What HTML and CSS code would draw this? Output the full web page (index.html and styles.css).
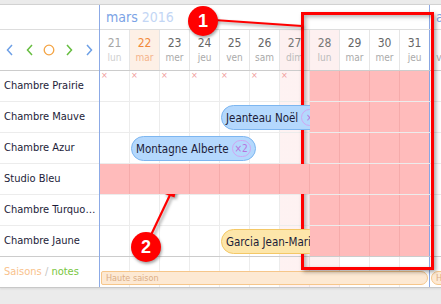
FILE: index.html
```html
<!DOCTYPE html>
<html lang="fr">
<head>
    <meta charset="UTF-8">
    <title>Planning - mars 2016</title>
    <link rel="stylesheet" href="styles.css">
</head>
<body>
    <div class="planner">
        <div class="side">
            <div class="side-head"></div>
            <div class="nav">
                <span class="nav-btn"><svg width="8" height="12" viewBox="0 0 8 12"><path d="M6 1 1.5 6 6 11" fill="none" stroke="#6d9fe6" stroke-width="1.5"/></svg></span>
                <span class="nav-btn"><svg width="8" height="12" viewBox="0 0 8 12"><path d="M6 1 1.5 6 6 11" fill="none" stroke="#66bd3f" stroke-width="1.5"/></svg></span>
                <span class="nav-btn"><svg width="12" height="12" viewBox="0 0 12 12"><circle cx="6" cy="6" r="4.8" fill="none" stroke="#f4a444" stroke-width="1.3"/></svg></span>
                <span class="nav-btn"><svg width="8" height="12" viewBox="0 0 8 12"><path d="M2 1 6.5 6 2 11" fill="none" stroke="#66bd3f" stroke-width="1.5"/></svg></span>
                <span class="nav-btn"><svg width="8" height="12" viewBox="0 0 8 12"><path d="M2 1 6.5 6 2 11" fill="none" stroke="#6d9fe6" stroke-width="1.5"/></svg></span>
            </div>
            <div class="room">Chambre Prairie</div>
            <div class="room">Chambre Mauve</div>
            <div class="room">Chambre Azur</div>
            <div class="room">Studio Bleu</div>
            <div class="room">Chambre Turquoise</div>
            <div class="room last">Chambre Jaune</div>
            <div class="season-label"><span class="saisons">Saisons</span> / <span class="notes">notes</span></div>
        </div>

        <div class="timeline">
            <div class="months">
                <div class="month">mars <span class="year">2016</span></div>
                <div class="month next">avril</div>
            </div>
            <div class="days">
                <div class="day past"><b>21</b><span>lun</span></div>
                <div class="day today"><b>22</b><span>mar</span></div>
                <div class="day"><b>23</b><span>mer</span></div>
                <div class="day"><b>24</b><span>jeu</span></div>
                <div class="day"><b>25</b><span>ven</span></div>
                <div class="day"><b>26</b><span>sam</span></div>
                <div class="day hol"><b>27</b><span>dim</span></div>
                <div class="day hol"><b>28</b><span>lun</span></div>
                <div class="day"><b>29</b><span>mar</span></div>
                <div class="day"><b>30</b><span>mer</span></div>
                <div class="day month-end"><b>31</b><span>jeu</span></div>
                <div class="day"><b>1</b><span>ven</span></div>
            </div>

            <div class="lane">
                <span class="closed">&times;</span>
                <span class="closed">&times;</span>
                <span class="closed">&times;</span>
                <span class="closed">&times;</span>
                <span class="closed">&times;</span>
                <span class="closed">&times;</span>
                <span class="closed">&times;</span>
                <div class="blocked" style="grid-column: 8 / 12"></div>
            </div>
            <div class="lane">
                <div class="booking" style="grid-column-start: 5">Jeanteau Noël <span class="qty">&times;</span></div>
                <div class="blocked" style="grid-column: 8 / 12"></div>
            </div>
            <div class="lane">
                <div class="booking" style="grid-column-start: 2">Montagne Alberte <span class="qty">&times;2</span></div>
                <div class="blocked" style="grid-column: 8 / 12"></div>
            </div>
            <div class="lane">
                <div class="blocked" style="grid-column: 1 / 12"></div>
            </div>
            <div class="lane">
                <div class="blocked" style="grid-column: 8 / 12"></div>
            </div>
            <div class="lane last">
                <div class="booking pending" style="grid-column-start: 5">Garcia Jean-Marie</div>
                <div class="blocked" style="grid-column: 8 / 12"></div>
            </div>
            <div class="lane season">
                <div class="season-bar" style="grid-column: 1 / 12">Haute saison</div>
                <div class="season-bar starts" style="grid-column: 12 / 13">Haute saison</div>
            </div>
        </div>
    </div>

    <!-- annotations -->
    <div class="callout"></div>
    <svg class="leaders" width="441" height="304" viewBox="0 0 441 304">
        <line x1="214" y1="20" x2="302" y2="26" stroke="#f00" stroke-width="2"/>
        <line x1="151" y1="235" x2="170" y2="195" stroke="#f00" stroke-width="2.2"/>
        <polygon points="177.5,182.5 163.5,193.5 174.5,197.5" fill="#f00"/>
    </svg>
    <div class="marker marker-1">1</div>
    <div class="marker marker-2">2</div>
</body>
</html>
```

FILE: styles.css
```css
* {
    margin: 0;
    padding: 0;
    box-sizing: border-box;
}

body {
    background: #ebebeb;
    font-family: "DejaVu Sans Condensed", "Liberation Sans", Arial, sans-serif;
    font-stretch: condensed;
    font-size: 11px;
    color: #1c1c38;
    width: 441px;
    height: 304px;
    overflow: hidden;
    position: relative;
}

.planner {
    display: flex;
    margin-top: 4px;
    background: #fff;
    border-top: 1px solid #d2d2d2;
    border-bottom: 1px solid #c8c8c8;
    overflow: hidden;
    box-shadow: 0 1px 2px rgba(0, 0, 0, 0.08);
}

/* left column */
.side {
    flex: none;
    width: 100px;
    border-right: 1px solid #8caae6;
}

.side-head {
    height: 25px;
    border-bottom: 1px solid #ddd;
}

.nav {
    height: 41px;
    border-bottom: 1px solid #ccc;
    display: flex;
    align-items: center;
}

.nav-btn {
    width: 20px;
    display: flex;
    justify-content: center;
}

.room {
    height: 31px;
    line-height: 30px;
    padding: 0 2px 0 4px;
    border-bottom: 1px solid #ececec;
    white-space: nowrap;
    overflow: hidden;
    text-overflow: ellipsis;
}

.room.last {
    border-bottom-color: #ccc;
}

.season-label {
    height: 30px;
    line-height: 30px;
    padding-left: 4px;
    color: #c4c4c4;
}

.saisons {
    color: #f9c28c;
}

.notes {
    color: #79c63e;
}

/* timeline */
.timeline {
    flex: none;
    width: 360px;
}

.months {
    display: flex;
    height: 25px;
    border-bottom: 1px solid #ddd;
}

.month {
    flex: none;
    width: 330px;
    padding-left: 6px;
    line-height: 24px;
    font-size: 14px;
    color: #7ba3e6;
    border-right: 1px solid #8caae6;
}

.month.next {
    width: 30px;
    border-right: none;
}

.year {
    color: #c3d6f5;
}

.days {
    display: grid;
    grid-template-columns: repeat(12, 30px);
    height: 41px;
    border-bottom: 1px solid #ccc;
}

.day {
    display: flex;
    flex-direction: column;
    align-items: center;
    justify-content: center;
    border-right: 1px solid #e6e6e6;
}

.day b {
    font-weight: normal;
    font-size: 12px;
    line-height: 15px;
    color: #666;
}

.day span {
    font-size: 10px;
    line-height: 13px;
    color: #aaa;
}

.day.past b { color: #a6a6a6; }
.day.past span { color: #cfcfcf; }

.day.today { background: #fdf0e6; }
.day.today b { color: #f2893a; }
.day.today span { color: #f5b48c; }

.day.hol { background: #fdf0f0; }
.day.hol b { color: #777; }
.day.hol span { color: #bbb; }

.day.month-end {
    border-right-color: #8caae6;
}

.lane {
    display: grid;
    grid-template-columns: repeat(12, 30px);
    grid-template-rows: 30px;
    height: 31px;
    border-bottom: 1px solid #ececec;
    background:
        linear-gradient(#8caae6, #8caae6) 329px 0 / 1px 100% no-repeat,
        linear-gradient(rgba(240, 90, 90, 0.08), rgba(240, 90, 90, 0.08)) 180px 0 / 60px 100% no-repeat,
        repeating-linear-gradient(to right, transparent 0 29px, #ececec 29px 30px);
}

.lane.last {
    border-bottom-color: #ccc;
}

.lane.season {
    height: 30px;
    border-bottom: none;
}

.lane > * {
    grid-row: 1;
}

.closed {
    justify-self: start;
    align-self: start;
    margin: 1px 0 0 1px;
    font-size: 9px;
    line-height: 7px;
    color: #f09a9a;
}

.blocked {
    z-index: 2;
    margin-right: 1px;
    background: repeating-linear-gradient(to right, #ffbbbb 0 29px, #f5abab 29px 30px);
}

.booking {
    z-index: 1;
    justify-self: start;
    align-self: start;
    margin: 3px 0 0 1px;
    height: 25px;
    padding: 0 4px 0 4px;
    display: flex;
    align-items: center;
    gap: 3px;
    border: 1px solid #7db6f0;
    border-radius: 13px;
    background: #b4d8fd;
    white-space: nowrap;
    font-size: 11.5px;
}

.booking.pending {
    background: #fde6aa;
    border-color: #f4c866;
}

.qty {
    height: 17px;
    min-width: 17px;
    padding: 0 2px;
    border: 1px solid #d0a6f2;
    border-radius: 9px;
    color: #b874dc;
    font-size: 10px;
    line-height: 15px;
    text-align: center;
}

.season-bar {
    align-self: end;
    height: 14px;
    margin: 0 2px 2px 1px;
    padding-left: 4px;
    background: #fde9d3;
    border: 1px solid #f6c68a;
    border-radius: 2px 7px 7px 2px;
    color: #dcae86;
    font-size: 9px;
    line-height: 12px;
    white-space: nowrap;
    overflow: hidden;
}

.season-bar.starts {
    margin-right: 0;
    border-radius: 7px 2px 2px 7px;
}

/* annotations */
.callout {
    position: absolute;
    left: 301px;
    top: 12px;
    width: 133px;
    height: 258px;
    border: 3px solid #f00;
    box-shadow: 2px 2px 4px rgba(0, 0, 0, 0.35), inset 2px 2px 4px rgba(0, 0, 0, 0.3);
}

.leaders {
    position: absolute;
    left: 0;
    top: 0;
    filter: drop-shadow(2px 2px 1.5px rgba(0, 0, 0, 0.35));
}

.marker {
    position: absolute;
    width: 30px;
    height: 30px;
    border-radius: 50%;
    background: #f00;
    color: #fff;
    font-family: "Liberation Sans", Arial, sans-serif;
    font-stretch: normal;
    font-size: 18px;
    font-weight: bold;
    display: flex;
    align-items: center;
    justify-content: center;
    box-shadow: 1px 2px 3px rgba(0, 0, 0, 0.35);
}

.marker-1 {
    left: 188px;
    top: 6px;
}

.marker-2 {
    left: 131px;
    top: 232px;
}
```
